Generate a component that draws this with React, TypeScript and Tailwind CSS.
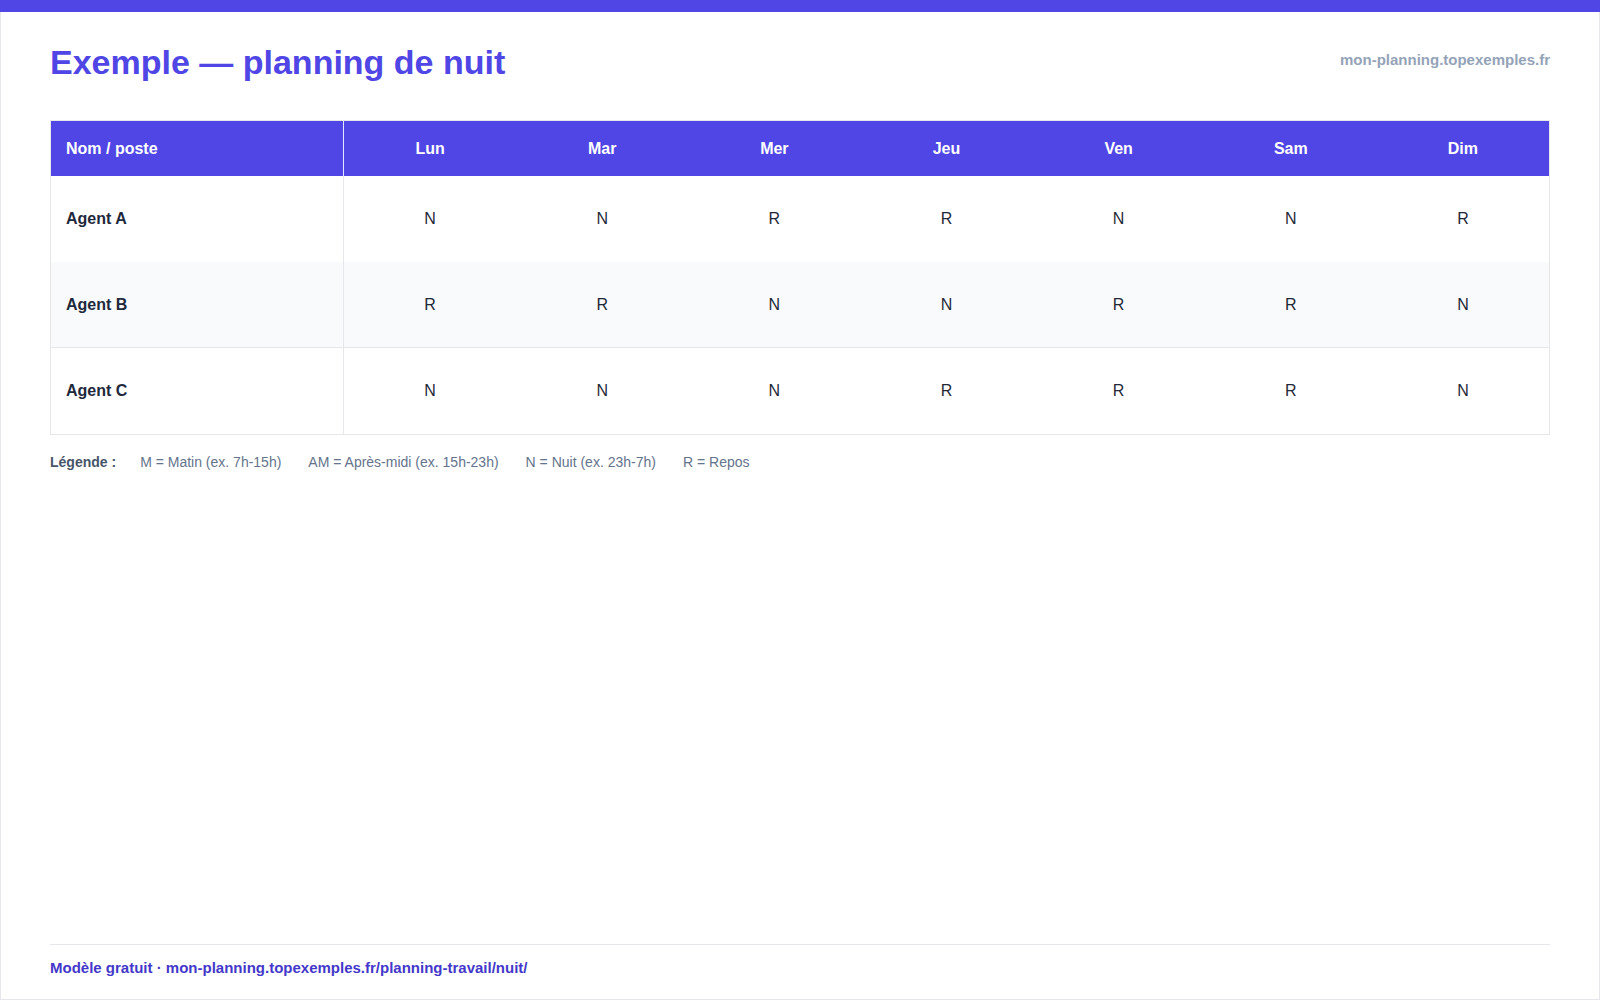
import React from "react";

const days = ["Lun", "Mar", "Mer", "Jeu", "Ven", "Sam", "Dim"];
const rows: { name: string; cells: string[]; alt?: boolean; line?: boolean }[] = [
  { name: "Agent A", cells: ["N", "N", "R", "R", "N", "N", "R"] },
  { name: "Agent B", cells: ["R", "R", "N", "N", "R", "R", "N"], alt: true, line: true },
  { name: "Agent C", cells: ["N", "N", "N", "R", "R", "R", "N"] },
];

export default function App() {
  return (
    <div
      className="w-full h-[1000px] flex flex-col bg-white"
      style={{ fontFamily: '"Liberation Sans", Arial, Helvetica, sans-serif' }}
    >
      <div className="h-[12px] bg-[#4f46e5] shrink-0" />
      <div className="flex-1 flex flex-col border-x border-b border-[#e5e7eb] px-[49px]">
        <div className="flex justify-between items-start pt-[30px]">
          <h1 className="text-[34px] leading-[40px] font-bold text-[#4f46e5]">
            Exemple — planning de nuit
          </h1>
          <div className="mt-[8px] text-[15px] leading-[20px] font-bold text-[#94a3b8]">
            mon-planning.topexemples.fr
          </div>
        </div>

        <div className="mt-[38px] border border-[#e5e7eb]">
          <div className="grid grid-cols-[293px_repeat(7,minmax(0,1fr))] h-[55px] bg-[#4f46e5] text-white text-[16px] font-bold">
            <div className="flex items-center pl-[15px] border-r border-[#e0e7ff]">Nom / poste</div>
            {days.map((d) => (
              <div key={d} className="flex items-center justify-center">
                {d}
              </div>
            ))}
          </div>
          {rows.map((r) => (
            <div
              key={r.name}
              className={
                "grid grid-cols-[293px_repeat(7,minmax(0,1fr))] h-[86px] text-[16px] " +
                (r.alt ? "bg-[#f8fafc] " : "bg-white ") +
                (r.line ? "border-b border-[#e5e7eb]" : "")
              }
            >
              <div className="flex items-center pl-[15px] border-r border-[#e5e7eb] font-bold text-[#1e293b]">
                {r.name}
              </div>
              {r.cells.map((c, i) => (
                <div key={i} className="flex items-center justify-center text-[#1f2937]">
                  {c}
                </div>
              ))}
            </div>
          ))}
        </div>

        <div className="mt-[17px] flex items-center text-[14px] leading-[20px] text-[#64748b]">
          <span className="font-bold text-[#475569] mr-[24px]">Légende :</span>
          <span className="mr-[27px]">M = Matin (ex. 7h-15h)</span>
          <span className="mr-[27px]">AM = Après-midi (ex. 15h-23h)</span>
          <span className="mr-[27px]">N = Nuit (ex. 23h-7h)</span>
          <span>R = Repos</span>
        </div>

        <div className="mt-auto border-t border-[#e5e7eb] pt-[13px] pb-[21px] text-[15px] leading-[20px] font-bold text-[#4338ca]">
          Modèle gratuit · mon-planning.topexemples.fr/planning-travail/nuit/
        </div>
      </div>
    </div>
  );
}
